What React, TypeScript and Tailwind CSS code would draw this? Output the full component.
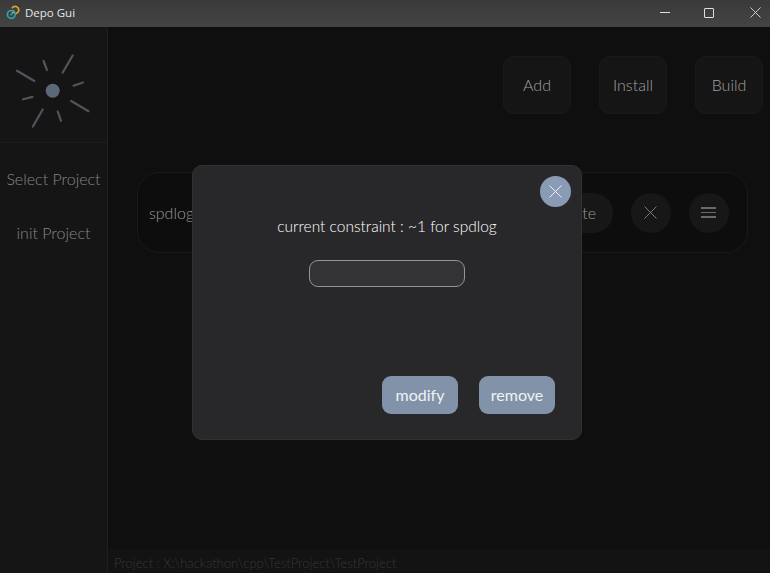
const Logo = () => (
  <svg width="107" height="116" viewBox="0 27 107 116" fill="none" stroke="#50545c" strokeWidth="2.2" strokeLinecap="round">
    <line x1="72.7" y1="55.5" x2="62.7" y2="72.5" />
    <line x1="43.5" y1="61" x2="47" y2="70" />
    <line x1="17" y1="70.7" x2="34.3" y2="81" />
    <line x1="73.5" y1="85.7" x2="83" y2="82.5" />
    <line x1="23" y1="99.3" x2="32.5" y2="96.9" />
    <line x1="71.2" y1="101" x2="88.5" y2="111.2" />
    <line x1="42.7" y1="109.5" x2="32.9" y2="126.5" />
    <line x1="57.7" y1="111.5" x2="61" y2="120.8" />
    <circle cx="52.7" cy="90.8" r="7" fill="#5c6879" stroke="none" />
  </svg>
);

const AppIcon = () => (
  <svg width="14" height="15" viewBox="0 0 14 15" fill="none" strokeWidth="1.7">
    <path d="M6 3.2 A3.6 3.6 0 1 1 9.6 8.6" stroke="#d9a531" />
    <path d="M7.6 5.4 A2 2 0 0 1 6 8" stroke="#d9a531" />
    <circle cx="5.3" cy="9.4" r="3.9" stroke="#2ba6ad" />
    <circle cx="5.3" cy="9.4" r="1.1" fill="#2ba6ad" stroke="none" />
  </svg>
);

const CloseIcon = ({ size, color }: { size: number; color: string }) => (
  <svg width={size} height={size} viewBox="0 0 12 12" fill="none" stroke={color} strokeWidth="0.9">
    <path d="M0.5 0.5 L11.5 11.5 M11.5 0.5 L0.5 11.5" />
  </svg>
);

const TitleBar = () => (
  <div className="h-[27px] shrink-0 flex items-center bg-gradient-to-b from-[#3a3a3a] to-[#444444]">
    <div className="ml-[6px] -mt-[2px]">
      <AppIcon />
    </div>
    <span className="ml-[5px] -mt-[2px] text-[11.5px] text-[#e6e6e6] font-['Open_Sans',sans-serif]">Depo Gui</span>
    <div className="ml-auto flex items-center -mt-[2px]">
      <div className="w-[44px] flex justify-center">
        <div className="w-[10px] h-px bg-[#e0e0e0]" />
      </div>
      <div className="w-[44px] mr-[9px] flex justify-center">
        <div className="w-[10px] h-[10px] border border-[#e0e0e0] rounded-[1px]" />
      </div>
      <div className="w-[30px] flex justify-center">
        <CloseIcon size={11} color="#e6e6e6" />
      </div>
    </div>
  </div>
);

const Sidebar = () => (
  <div className="w-[108px] shrink-0 bg-[#151516] border-r border-[#1f1f21] flex flex-col">
    <div className="h-[116px] border-b border-[#1c1c1e]">
      <Logo />
    </div>
    <div className="h-[52px] flex items-end justify-center pb-[4px] text-[#858588] text-[16px] font-light">Select Project</div>
    <div className="h-[54px] flex items-end justify-center pb-[4px] text-[#858588] text-[16px] font-light">init Project</div>
  </div>
);

const TopButton = ({ label }: { label: string }) => (
  <div className="w-[68px] h-[58px] flex items-center justify-center rounded-[10px] bg-[#151515] border border-[#191919] text-[16px] font-light text-[#a0a0a0]">
    {label}
  </div>
);

const CircleButton = ({ children }: { children: React.ReactNode }) => (
  <div className="w-[40px] h-[40px] rounded-full bg-[#171717] flex items-center justify-center">{children}</div>
);

const Main = () => (
  <div className="flex-1 min-w-0 flex flex-col bg-[#0f0f0f]">
    <div className="flex-1 flex flex-col min-h-0">
      <div className="flex justify-end gap-[28px] pt-[29px] pr-[7px]">
        <TopButton label="Add" />
        <TopButton label="Install" />
        <TopButton label="Build" />
      </div>
      <div className="mt-[58px] ml-[29px] mr-[22px] h-[81px] rounded-[22px] border border-[#1a1a1a] bg-[#0d0d0d] flex items-center pl-[11px] pr-[18px]">
        <span className="text-[16px] font-light text-[#9a9a9a]">spdlog</span>
        <div className="ml-auto flex items-center gap-[18px]">
          <div className="w-[60px] h-[40px] rounded-full bg-[#171717] flex items-center justify-end pr-[17px] text-[16px] font-light text-[#9a9a9a]">
            Update
          </div>
          <CircleButton>
            <div className="-ml-[2px]">
              <CloseIcon size={13} color="#808080" />
            </div>
          </CircleButton>
          <CircleButton>
            <div className="w-[15px] -ml-[2px] flex flex-col gap-[3px]">
              <div className="h-[1.5px] bg-[#6a6a6a]" />
              <div className="h-[1.5px] bg-[#6a6a6a]" />
              <div className="h-[1.5px] bg-[#6a6a6a]" />
            </div>
          </CircleButton>
        </div>
      </div>
    </div>
    <div className="h-[24px] shrink-0 bg-[#131313] flex items-center pt-[5px] pl-[6px] text-[13px] font-light text-[#363636]">
      Project : X:\hackathon\cpp\TestProject\TestProject
    </div>
  </div>
);

const Modal = () => (
  <div className="absolute left-[192px] top-[165px] w-[390px] h-[275px] rounded-[10px] bg-[#28282a] border border-[#313133] flex flex-col">
    <div className="absolute left-[347px] top-[10px] w-[31px] h-[31px] rounded-full bg-[#8a9cb5] flex items-center justify-center">
      <CloseIcon size={13} color="#eef1f5" />
    </div>
    <div className="mt-[49px] text-center text-[15.5px] font-light text-white">current constraint : ~1 for spdlog</div>
    <div className="mt-[22px] ml-[116px] w-[156px] h-[27px] rounded-[9px] bg-[#333335] border border-[#8d96a3]" />
    <div className="mt-auto mb-[25px] ml-auto mr-[26px] flex gap-[21px]">
      <div className="w-[76px] h-[38px] rounded-[9px] bg-[#8292a8] flex items-center justify-center text-[16px] text-[#f0f2f5]">
        modify
      </div>
      <div className="w-[76px] h-[38px] rounded-[9px] bg-[#8292a8] flex items-center justify-center text-[16px] text-[#f0f2f5]">
        remove
      </div>
    </div>
  </div>
);

export default function App() {
  return (
    <div className="relative w-[770px] h-[573px] overflow-hidden flex flex-col bg-[#0f0f0f] font-['Lato',sans-serif]">
      <TitleBar />
      <div className="flex-1 flex min-h-0">
        <Sidebar />
        <Main />
      </div>
      <Modal />
    </div>
  );
}
